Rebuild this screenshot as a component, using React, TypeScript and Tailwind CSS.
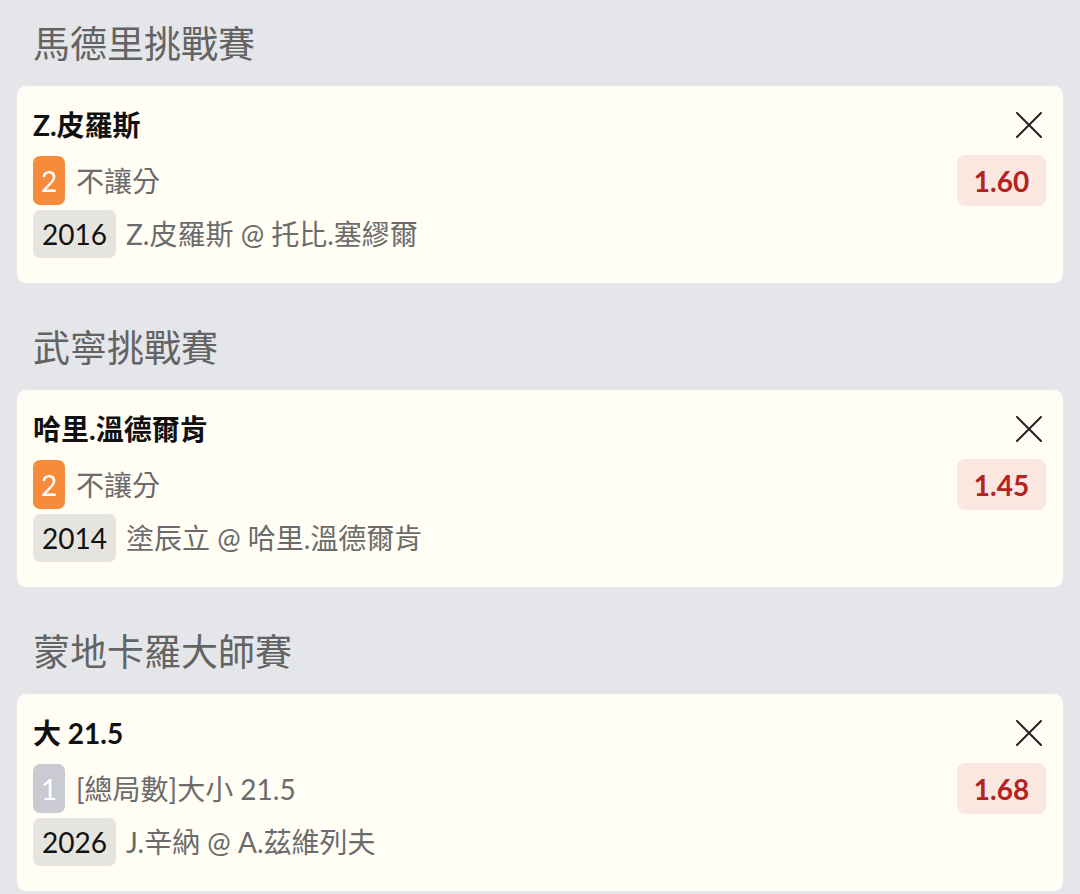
import React from "react";

type Bet = {
  league: string;
  title: string;
  num: string;
  numColor: "orange" | "gray";
  market: string;
  code: string;
  match: string;
  odds: string;
};

const bets: Bet[] = [
  {
    league: "馬德里挑戰賽",
    title: "Z.皮羅斯",
    num: "2",
    numColor: "orange",
    market: "不讓分",
    code: "2016",
    match: "Z.皮羅斯 @ 托比.塞繆爾",
    odds: "1.60",
  },
  {
    league: "武寧挑戰賽",
    title: "哈里.溫德爾肯",
    num: "2",
    numColor: "orange",
    market: "不讓分",
    code: "2014",
    match: "塗辰立 @ 哈里.溫德爾肯",
    odds: "1.45",
  },
  {
    league: "蒙地卡羅大師賽",
    title: "大 21.5",
    num: "1",
    numColor: "gray",
    market: "[總局數]大小 21.5",
    code: "2026",
    match: "J.辛納 @ A.茲維列夫",
    odds: "1.68",
  },
];

function CloseIcon() {
  return (
    <svg width="26" height="26" viewBox="0 0 26 26" fill="none">
      <path d="M1 1L25 25M25 1L1 25" stroke="#222" strokeWidth="2" strokeLinecap="round" />
    </svg>
  );
}

function Card({ bet }: { bet: Bet }) {
  return (
    <div className="rounded-[9px] bg-[#fffdf4] pt-[22px] pb-[25px] pl-[16px] pr-[17px]">
      <div className="flex h-[34px] items-center justify-between">
        <div className="text-[28px] font-bold leading-none text-[#111]">{bet.title}</div>
        <div className="mr-[4px]">
          <CloseIcon />
        </div>
      </div>
      <div className="mt-[13px] flex items-center justify-between">
        <div className="flex items-center">
          <div
            className={
              bet.numColor === "orange"
                ? "flex h-[49px] w-[32px] items-center justify-center rounded-[7px] bg-[#f68b3a] text-[28px] leading-none text-white"
                : "flex h-[49px] w-[32px] items-center justify-center rounded-[7px] bg-[#c9cad2] text-[28px] leading-none text-white"
            }
          >
            {bet.num}
          </div>
          <div className="ml-[11px] text-[28px] leading-none text-[#6b6b6b]">{bet.market}</div>
        </div>
        <div className="flex h-[51px] w-[89px] items-center justify-center rounded-[8px] bg-[#f9e7e0] text-[28px] font-bold leading-none text-[#b3231f]">
          {bet.odds}
        </div>
      </div>
      <div className="mt-[4px] flex items-center">
        <div className="flex h-[48px] w-[83px] items-center justify-center rounded-[7px] bg-[#e6e4de] text-[28px] leading-none text-[#111]">
          {bet.code}
        </div>
        <div className="ml-[10px] text-[28px] leading-none text-[#6b6b6b]">{bet.match}</div>
      </div>
    </div>
  );
}

export default function App() {
  return (
    <div
      className="min-h-[894px] w-[1080px] bg-[#e5e6ea] px-[17px]"
      style={{ fontFamily: "Lato, 'Noto Sans CJK TC', sans-serif" }}
    >
      {bets.map((b, i) => (
        <div key={i} className="pb-[21px]">
          <div className="flex h-[86px] items-center pl-[16px] text-[37px] leading-none text-[#636363]">
            {b.league}
          </div>
          <Card bet={b} />
        </div>
      ))}
    </div>
  );
}
